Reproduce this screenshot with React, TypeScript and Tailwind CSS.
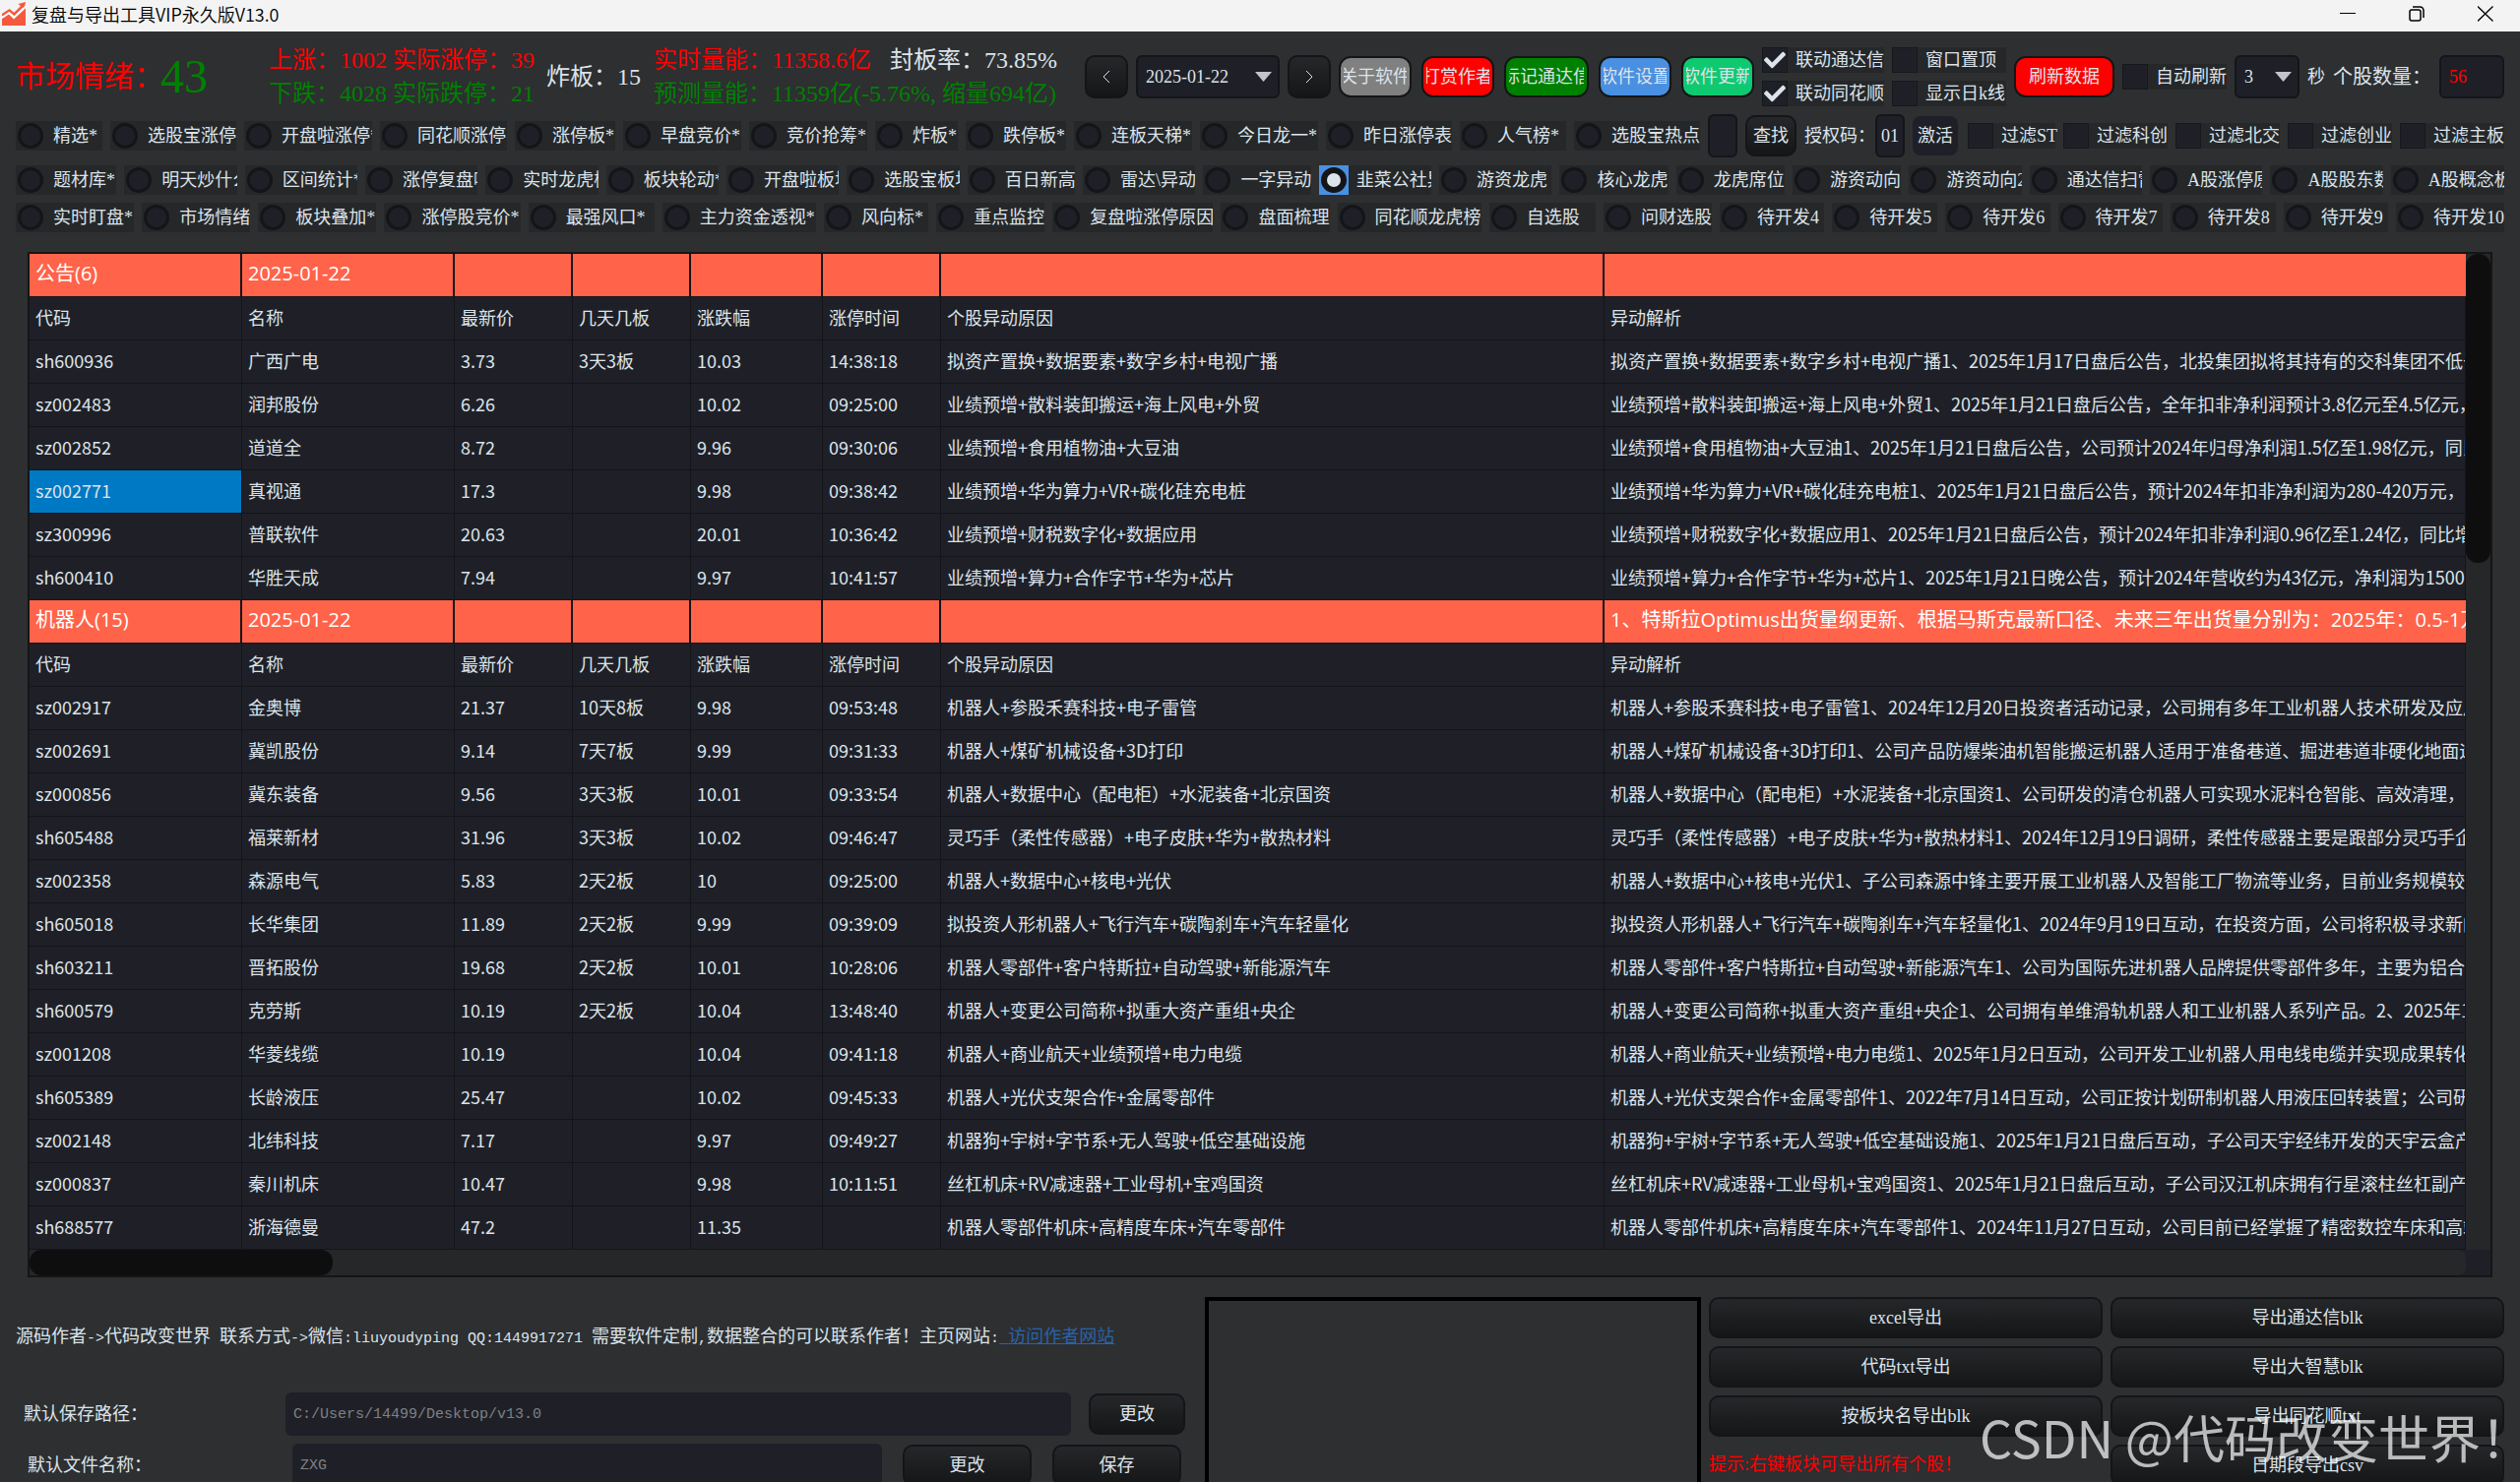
import { ComponentProps, ReactNode, useState } from 'react'

import { clsx } from 'clsx'
import { FaCheck } from 'react-icons/fa'

type Option = [label: string, width: string]

const firstRow: Option[] = [
  ['精选*', 'flex-88'],
  ['选股宝涨停', 'flex-128'],
  ['开盘啦涨停*', 'flex-130'],
  ['同花顺涨停', 'flex-129'],
  ['涨停板*', 'flex-102'],
  ['早盘竞价*', 'flex-120'],
  ['竞价抢筹*', 'flex-120'],
  ['炸板*', 'flex-84'],
  ['跌停板*', 'flex-102'],
  ['连板天梯*', 'flex-120'],
  ['今日龙一*', 'flex-120'],
  ['昨日涨停表', 'flex-128'],
  ['人气榜*', 'flex-108'],
  ['选股宝热点', 'flex-128'],
]

const filters: Option[] = [
  ['过滤ST', 'w-[89px]'],
  ['过滤科创', 'w-[106px]'],
  ['过滤北交', 'w-[106px]'],
  ['过滤创业', 'w-[106px]'],
  ['过滤主板', 'w-[106px]'],
]

const secondRow: Option[] = [
  ['题材库*', 'flex-102'],
  ['明天炒什么', 'flex-114'],
  ['区间统计*', 'flex-114'],
  ['涨停复盘啦', 'flex-114'],
  ['实时龙虎榜', 'flex-114'],
  ['板块轮动*', 'flex-114'],
  ['开盘啦板块', 'flex-114'],
  ['选股宝板块', 'flex-114'],
  ['百日新高', 'flex-109'],
  ['雷达\\异动', 'flex-114'],
  ['一字异动', 'flex-109'],
  ['韭菜公社异动', 'flex-114'],
  ['游资龙虎', 'flex-114'],
  ['核心龙虎', 'flex-110'],
  ['龙虎席位', 'flex-110'],
  ['游资动向', 'flex-110'],
  ['游资动向2', 'flex-114'],
  ['通达信扫雷', 'flex-114'],
  ['A股涨停原因', 'flex-114'],
  ['A股股东数', 'flex-114'],
  ['A股概念板块', 'flex-115'],
]

const thirdRow: Option[] = [
  ['实时盯盘*', 'flex-120'],
  ['市场情绪', 'flex-110'],
  ['板块叠加*', 'flex-120'],
  ['涨停股竞价*', 'flex-138'],
  ['最强风口*', 'flex-128'],
  ['主力资金透视*', 'flex-156'],
  ['风向标*', 'flex-106'],
  ['重点监控', 'flex-110'],
  ['复盘啦涨停原因', 'flex-163'],
  ['盘面梳理', 'flex-110'],
  ['同花顺龙虎榜', 'flex-146'],
  ['自选股', 'flex-108'],
  ['问财选股', 'flex-110'],
  ['待开发4', 'flex-106'],
  ['待开发5', 'flex-107'],
  ['待开发6', 'flex-106'],
  ['待开发7', 'flex-106'],
  ['待开发8', 'flex-107'],
  ['待开发9', 'flex-106'],
  ['待开发10', 'flex-110'],
]

type Stock = [
  code: string,
  name: string,
  price: string,
  boards: string,
  change: string,
  time: string,
  reason: string,
  detail: string,
]

type Group = { title: string; note: string; stocks: Stock[] }

const groups: Group[] = [
  {
    title: '公告(6)',
    note: '',
    stocks: [
      ['sh600936', '广西广电', '3.73', '3天3板', '10.03', '14:38:18', '拟资产置换+数据要素+数字乡村+电视广播', '1、2025年1月17日盘后公告，北投集团拟将其持有的交科集团不低于51%股权与公司置换'],
      ['sz002483', '润邦股份', '6.26', '', '10.02', '09:25:00', '业绩预增+散料装卸搬运+海上风电+外贸', '1、2025年1月21日盘后公告，全年扣非净利润预计3.8亿元至4.5亿元，同比增长'],
      ['sz002852', '道道全', '8.72', '', '9.96', '09:30:06', '业绩预增+食用植物油+大豆油', '1、2025年1月21日盘后公告，公司预计2024年归母净利润1.5亿至1.98亿元，同比增长'],
      ['sz002771', '真视通', '17.3', '', '9.98', '09:38:42', '业绩预增+华为算力+VR+碳化硅充电桩', '1、2025年1月21日盘后公告，预计2024年扣非净利润为280-420万元，扭亏为盈'],
      ['sz300996', '普联软件', '20.63', '', '20.01', '10:36:42', '业绩预增+财税数字化+数据应用', '1、2025年1月21日盘后公告，预计2024年扣非净利润0.96亿至1.24亿，同比增长'],
      ['sh600410', '华胜天成', '7.94', '', '9.97', '10:41:57', '业绩预增+算力+合作字节+华为+芯片', '1、2025年1月21日晚公告，预计2024年营收约为43亿元，净利润为1500万元'],
    ],
  },
  {
    title: '机器人(15)',
    note: '1、特斯拉Optimus出货量纲更新、根据马斯克最新口径、未来三年出货量分别为：2025年：0.5-1万台',
    stocks: [
      ['sz002917', '金奥博', '21.37', '10天8板', '9.98', '09:53:48', '机器人+参股禾赛科技+电子雷管', '1、2024年12月20日投资者活动记录，公司拥有多年工业机器人技术研发及应用经验'],
      ['sz002691', '冀凯股份', '9.14', '7天7板', '9.99', '09:31:33', '机器人+煤矿机械设备+3D打印', '1、公司产品防爆柴油机智能搬运机器人适用于准备巷道、掘进巷道非硬化地面运输'],
      ['sz000856', '冀东装备', '9.56', '3天3板', '10.01', '09:33:54', '机器人+数据中心（配电柜）+水泥装备+北京国资', '1、公司研发的清仓机器人可实现水泥料仓智能、高效清理，减少人工'],
      ['sh605488', '福莱新材', '31.96', '3天3板', '10.02', '09:46:47', '灵巧手（柔性传感器）+电子皮肤+华为+散热材料', '1、2024年12月19日调研，柔性传感器主要是跟部分灵巧手企业合作'],
      ['sz002358', '森源电气', '5.83', '2天2板', '10', '09:25:00', '机器人+数据中心+核电+光伏', '1、子公司森源中锋主要开展工业机器人及智能工厂物流等业务，目前业务规模较小'],
      ['sh605018', '长华集团', '11.89', '2天2板', '9.99', '09:39:09', '拟投资人形机器人+飞行汽车+碳陶刹车+汽车轻量化', '1、2024年9月19日互动，在投资方面，公司将积极寻求新的机会'],
      ['sh603211', '晋拓股份', '19.68', '2天2板', '10.01', '10:28:06', '机器人零部件+客户特斯拉+自动驾驶+新能源汽车', '1、公司为国际先进机器人品牌提供零部件多年，主要为铝合金零部件'],
      ['sh600579', '克劳斯', '10.19', '2天2板', '10.04', '13:48:40', '机器人+变更公司简称+拟重大资产重组+央企', '1、公司拥有单维滑轨机器人和工业机器人系列产品。2、2025年1月公告'],
      ['sz001208', '华菱线缆', '10.19', '', '10.04', '09:41:18', '机器人+商业航天+业绩预增+电力电缆', '1、2025年1月2日互动，公司开发工业机器人用电线电缆并实现成果转化应用'],
      ['sh605389', '长龄液压', '25.47', '', '10.02', '09:45:33', '机器人+光伏支架合作+金属零部件', '1、2022年7月14日互动，公司正按计划研制机器人用液压回转装置；公司研发'],
      ['sz002148', '北纬科技', '7.17', '', '9.97', '09:49:27', '机器狗+宇树+字节系+无人驾驶+低空基础设施', '1、2025年1月21日盘后互动，子公司天宇经纬开发的天宇云盒产品'],
      ['sz000837', '秦川机床', '10.47', '', '9.98', '10:11:51', '丝杠机床+RV减速器+工业母机+宝鸡国资', '1、2025年1月21日盘后互动，子公司汉江机床拥有行星滚柱丝杠副产品'],
      ['sh688577', '浙海德曼', '47.2', '', '11.35', '', '机器人零部件机床+高精度车床+汽车零部件', '1、2024年11月27日互动，公司目前已经掌握了精密数控车床和高端机床'],
    ],
  },
]

const columns = ['代码', '名称', '最新价', '几天几板', '涨跌幅', '涨停时间', '个股异动原因', '异动解析']

const leftExports = ['excel导出', '代码txt导出', '按板块名导出blk']
const rightExports = ['导出通达信blk', '导出大智慧blk', '导出同花顺txt', '日期段导出csv']

const AppIcon = () => (
  <svg className="size-6" viewBox="0 0 24 24" aria-hidden="true">
    <path d="M0 17 7 12.500 12 17.500 24 6.500V24H0Z" fill="#f5593d" />
    <path d="M0 13.500 7.500 8.500 12.500 12.500 21 4" fill="none" stroke="#f5593d" strokeWidth="2.500" />
    <path d="M16.500 2 24 0 22.500 7.500Z" fill="#f5593d" />
    <path d="M0 16 7.200 11 12.200 15.500 24 4.500" fill="none" stroke="#fff" strokeWidth="1.600" />
  </svg>
)

const TitleBar = () => {
  const button = 'flex h-7 w-[70px] items-center justify-center'

  return (
    <header className="flex h-8 shrink-0 items-center bg-[#f3f3f3] pb-1 pl-0.5 text-black">
      <AppIcon />
      <h1 className="ml-1.5 flex-1 font-['Noto_Sans_CJK_SC',sans-serif] text-lg leading-7 font-[350]">
        复盘与导出工具VIP永久版V13.0
      </h1>
      <button className={button} aria-label="最小化">
        <svg className="size-4" viewBox="0 0 16 16" fill="none" stroke="currentColor">
          <path d="M0 7.500h16" />
        </svg>
      </button>
      <button className={button} aria-label="还原">
        <svg className="size-4" viewBox="0 0 16 16" fill="none" stroke="currentColor" strokeWidth="1.500">
          <rect x="1" y="4" width="11" height="11" rx="2" />
          <path d="M4 1h7.500a3.500 3.500 0 0 1 3.500 3.500V12" />
        </svg>
      </button>
      <button className={button} aria-label="关闭">
        <svg className="size-4" viewBox="0 0 16 16" fill="none" stroke="currentColor" strokeWidth="1.300">
          <path d="m0 .5 15.500 15M15.500.5 0 15.500" />
        </svg>
      </button>
    </header>
  )
}

const Button = ({ className, children, ...rest }: ComponentProps<'button'>) => (
  <button
    {...rest}
    className={clsx(
      'shrink-0 overflow-hidden rounded-[10px] border-2 border-[#141517] bg-linear-to-b from-[#25272a] to-[#151617] text-lg leading-6 whitespace-nowrap',
      className
    )}
  >
    {children}
  </button>
)

const ColorButton = ({ className, children, ...rest }: ComponentProps<'button'>) => (
  <button
    {...rest}
    className={clsx(
      'h-[42px] shrink-0 rounded-xl border-2 border-[#141517] px-[3px] text-lg leading-6',
      className
    )}
  >
    <span className="flex justify-center overflow-hidden whitespace-nowrap">{children}</span>
  </button>
)

type RadioProps = { label: string; className: string; checked: boolean; onSelect: () => void }

const Radio = ({ label, className, checked, onSelect }: RadioProps) => (
  <label className={clsx('flex h-[30px] min-w-0 items-center overflow-hidden bg-[#252729]', className)}>
    <span className={clsx('flex size-[30px] shrink-0 items-center justify-center', checked && 'bg-[#4a90e2]')}>
      <input
        type="radio"
        name="board"
        checked={checked}
        onChange={onSelect}
        className="size-[26px] appearance-none rounded-full border-3 border-[#141519] bg-[#1f2027] checked:border-6 checked:bg-[#dce3ea]"
      />
    </span>
    <span className="ml-2 text-lg leading-6 whitespace-nowrap">{label}</span>
  </label>
)

type CheckboxProps = { label: string; className?: string; defaultChecked?: boolean }

const Checkbox = ({ label, className, defaultChecked }: CheckboxProps) => (
  <label className={clsx('flex h-[26px] shrink-0 items-center bg-[#252729]', className)}>
    <span className="grid size-[26px] shrink-0 place-items-center">
      <input
        type="checkbox"
        defaultChecked={defaultChecked}
        className="peer col-start-1 row-start-1 size-[26px] appearance-none border border-[#17181b] bg-[#1f2027]"
      />
      <FaCheck className="pointer-events-none invisible col-start-1 row-start-1 size-[22px] text-[#dce3ea] peer-checked:visible" />
    </span>
    <span className="ml-2 text-lg leading-6 whitespace-nowrap">{label}</span>
  </label>
)

const Select = ({ className, children, ...rest }: ComponentProps<'select'>) => (
  <span className={clsx('grid h-11 shrink-0 items-center', className)}>
    <select
      {...rest}
      className="col-start-1 row-start-1 size-full appearance-none rounded-md border-2 border-[#141519] bg-[#1f2027] pl-2 text-lg"
    >
      {children}
    </select>
    <svg
      className="pointer-events-none col-start-1 row-start-1 mr-2 h-2.5 w-[17px] justify-self-end"
      viewBox="0 0 17 10"
      aria-hidden="true"
    >
      <path d="M0 0h17L8.500 10Z" fill="#c3c3cb" />
    </svg>
  </span>
)

// half-width run: 15px mono advances exactly half of an 18px Chinese glyph
const Mono = ({ children }: { children: ReactNode }) => (
  <span className="font-['Liberation_Mono',monospace] text-[15px] whitespace-pre">{children}</span>
)

const Stats = () => (
  <div className="flex min-w-0 flex-1 items-center overflow-hidden text-2xl leading-[34px] whitespace-nowrap">
    <p className="flex w-[257px] shrink-0 items-center text-[30px] text-[#ff0000]">
      <span className="w-[147px]">市场情绪：</span>
      <span className="text-5xl leading-[68px] text-[#008000]">43</span>
    </p>
    <div className="w-[282px] shrink-0">
      <p className="text-[#ff0000]">上涨：1002 实际涨停：39</p>
      <p className="text-[#008000]">下跌：4028 实际跌停：21</p>
    </div>
    <p className="w-[109px] shrink-0">炸板：15</p>
    <div>
      <p className="flex gap-2">
        <span className="w-[232px] text-[#ff0000]">实时量能：11358.6亿</span>
        <span>封板率：73.85%</span>
      </p>
      <p className="text-[#008000]">预测量能：11359亿(-5.76%, 缩量694亿)</p>
    </div>
  </div>
)

const Toolbar = () => {
  const [board, setBoard] = useState('韭菜公社异动')

  const renderRadio = ([label, width]: Option) => (
    <Radio
      key={label}
      label={label}
      className={width}
      checked={board === label}
      onSelect={() => setBoard(label)}
    />
  )

  return (
    <section className="px-4 pt-3">
      <div className="flex h-[68px] items-center gap-2">
        <Stats />
        <Button className="h-11 w-11" aria-label="前一天">
          <svg className="mx-auto h-3 w-2" viewBox="0 0 8 12" fill="none" stroke="currentColor">
            <path d="M7 0 1 6l6 6" />
          </svg>
        </Button>
        <Select className="w-[146px]" aria-label="日期">
          <option>2025-01-22</option>
        </Select>
        <Button className="h-11 w-11" aria-label="后一天">
          <svg className="mx-auto h-3 w-2" viewBox="0 0 8 12" fill="none" stroke="currentColor">
            <path d="m1 0 6 6-6 6" />
          </svg>
        </Button>
        <div className="flex gap-2.5">
          <ColorButton className="w-[74px] bg-[#808080]">关于软件</ColorButton>
          <ColorButton className="w-[74px] bg-[#ff0000]">打赏作者</ColorButton>
          <ColorButton className="w-[86px] bg-[#008000]">标记通达信</ColorButton>
          <ColorButton className="w-[74px] bg-[#4a90e2]">软件设置</ColorButton>
          <ColorButton className="w-[74px] bg-[#0fc971]">软件更新</ColorButton>
        </div>
        <div className="grid shrink-0 grid-cols-[124px_116px] gap-2">
          <Checkbox label="联动通达信" defaultChecked />
          <Checkbox label="窗口置顶" />
          <Checkbox label="联动同花顺" defaultChecked />
          <Checkbox label="显示日k线" />
        </div>
        <ColorButton className="w-[102px] bg-[#ff0000]">刷新数据</ColorButton>
        <Checkbox label="自动刷新" className="w-[106px]" />
        <Select className="w-[66px]" aria-label="刷新间隔">
          <option>3</option>
        </Select>
        <span className="text-lg">秒</span>
        <label htmlFor="stock-count" className="w-[100px] text-xl whitespace-nowrap">
          个股数量：
        </label>
        <input
          id="stock-count"
          readOnly
          value="56"
          className="h-11 w-[66px] shrink-0 rounded-md border-2 border-[#141519] bg-[#1f2027] px-2 text-lg text-[#ff0000]"
        />
      </div>

      <div className="mt-1 flex h-11 items-center gap-2">
        {firstRow.map(renderRadio)}
        <input
          aria-label="查找股票"
          className="h-11 w-[30px] shrink-0 rounded-md border-2 border-[#141519] bg-[#1f2027] px-1"
        />
        <Button className="h-[42px] w-[52px] text-lg">查找</Button>
        <label htmlFor="license" className="w-16 shrink-0 text-lg whitespace-nowrap">
          授权码：
        </label>
        <input
          id="license"
          readOnly
          value="01"
          className="h-11 w-[30px] shrink-0 rounded-md border-2 border-[#141519] bg-[#1f2027] pl-1 text-lg"
        />
        <button className="mr-0.5 h-10 w-[46px] shrink-0 rounded-lg bg-[#1f2027] text-lg">激活</button>
        {filters.map(([label, width]) => (
          <Checkbox key={label} label={label} className={width} />
        ))}
      </div>

      <div className="mt-2 flex gap-2">{secondRow.map(renderRadio)}</div>
      <div className="mt-2 flex gap-2">{thirdRow.map(renderRadio)}</div>
    </section>
  )
}

const StockTable = () => {
  const cell =
    'h-11 truncate border-r border-b border-[#141519] px-1.5 pt-0 pb-1 text-left font-normal text-clip'

  return (
    <section className="mx-7 mt-5 border-2 border-[#141517] bg-[#1f2027]">
      <div className="flex">
        <table className="w-full min-w-0 flex-1 table-fixed border-separate border-spacing-0 font-['Noto_Sans_CJK_SC',sans-serif] text-lg leading-6">
          <colgroup>
            <col className="w-[216px]" />
            <col className="w-[216px]" />
            <col className="w-[120px]" />
            <col className="w-[120px]" />
            <col className="w-[134px]" />
            <col className="w-[120px]" />
            <col className="w-[674px]" />
            <col />
          </colgroup>
          {groups.map(({ title, note, stocks }) => (
            <tbody key={title}>
              <tr className="bg-[#ff6349] font-['Open_Sans','Noto_Sans_CJK_SC',sans-serif] text-xl leading-6 text-white">
                {[title, '2025-01-22', '', '', '', '', '', note].map((text, i) => (
                  <td key={i} className={clsx(cell, i < 7 ? 'border-r-2' : 'border-r-0')}>
                    {text}
                  </td>
                ))}
              </tr>
              <tr>
                {columns.map(name => (
                  <th key={name} className={cell}>
                    {name}
                  </th>
                ))}
              </tr>
              {stocks.map(([code, name, price, boards, change, time, reason, detail]) => (
                <tr key={code}>
                  <td className={clsx(cell, code === 'sz002771' && 'bg-[#0079c4]')}>{code}</td>
                  <td className={cell}>{name}</td>
                  <td className={cell}>{price}</td>
                  <td className={cell}>{boards}</td>
                  <td className={cell}>{change}</td>
                  <td className={cell}>{time}</td>
                  <td className={cell}>{reason}</td>
                  <td className={cell}>
                    {reason}
                    {detail}
                  </td>
                </tr>
              ))}
            </tbody>
          ))}
        </table>
        <div className="w-[25px] shrink-0 bg-[#252729]">
          <div className="h-[31%] rounded-xl bg-[#0e0e0f]" />
        </div>
      </div>
      <div className="flex h-[26px]">
        <div className="flex-1 rounded-r-lg bg-[#252729]">
          <div className="h-[26px] w-[308px] rounded-xl bg-[#0e0e0f]" />
        </div>
        <div className="w-[25px]" />
      </div>
    </section>
  )
}

const Footer = () => {
  const field =
    'h-11 min-w-0 flex-1 rounded-md bg-[#1f2027] px-2 font-["Liberation_Mono",monospace] text-[15px] text-[#7e8085]'

  return (
    <footer className="mt-5 flex items-start px-4">
      <div className="min-w-0 flex-1 pr-5 text-lg leading-6">
        <p className="mt-7 mb-[42px] whitespace-nowrap">
          源码作者<Mono>{'->'}</Mono>代码改变世界<Mono> </Mono>联系方式<Mono>{'->'}</Mono>微信
          <Mono>:liuyoudyping QQ:1449917271 </Mono>
          需要软件定制<Mono>,</Mono>数据整合的可以联系作者！主页网站<Mono>:</Mono>
          <a href="#author" className="text-[#2a62a8] underline">
            <Mono> </Mono>访问作者网站
          </a>
        </p>
        <div className="flex items-center pl-2">
          <label htmlFor="save-path" className="w-[266px]">
            默认保存路径：
          </label>
          <input id="save-path" readOnly value="C:/Users/14499/Desktop/v13.0" className={field} />
          <Button className="ml-[18px] h-[42px] w-[98px]">更改</Button>
        </div>
        <div className="mt-2 flex items-center pr-1 pl-3">
          <label htmlFor="file-name" className="w-[269px]">
            默认文件名称：
          </label>
          <input id="file-name" readOnly value="ZXG" className={field} />
          <Button className="ml-[21px] h-[42px] w-[131px]">更改</Button>
          <Button className="ml-[21px] h-[42px] w-[131px]">保存</Button>
        </div>
      </div>
      <div className="h-[200px] w-[504px] shrink-0 border-4 border-b-0 border-black" />
      <div className="ml-2 grid w-[808px] shrink-0 grid-cols-2 gap-2">
        <div className="flex flex-col gap-2">
          {leftExports.map(label => (
            <Button key={label} className="h-[42px]">
              {label}
            </Button>
          ))}
          <p className="mt-2 text-lg leading-6 text-[#ff0000]">提示:右键板块可导出所有个股！</p>
        </div>
        <div className="flex flex-col gap-2">
          {rightExports.map(label => (
            <Button key={label} className="h-[42px]">
              {label}
            </Button>
          ))}
        </div>
      </div>
    </footer>
  )
}

export default function App() {
  return (
    <div className="relative flex h-screen flex-col overflow-hidden bg-[#2d2f31] font-['Liberation_Serif','Noto_Sans_CJK_SC',serif] text-[#dce3ea]">
      <TitleBar />
      <main>
        <Toolbar />
        <StockTable />
        <Footer />
      </main>
      <p className="pointer-events-none absolute -right-3 bottom-3 font-['Noto_Sans_CJK_SC',sans-serif] text-[52px] leading-[68px] whitespace-nowrap text-white/70">
        CSDN @代码改变世界！
      </p>
    </div>
  )
}
